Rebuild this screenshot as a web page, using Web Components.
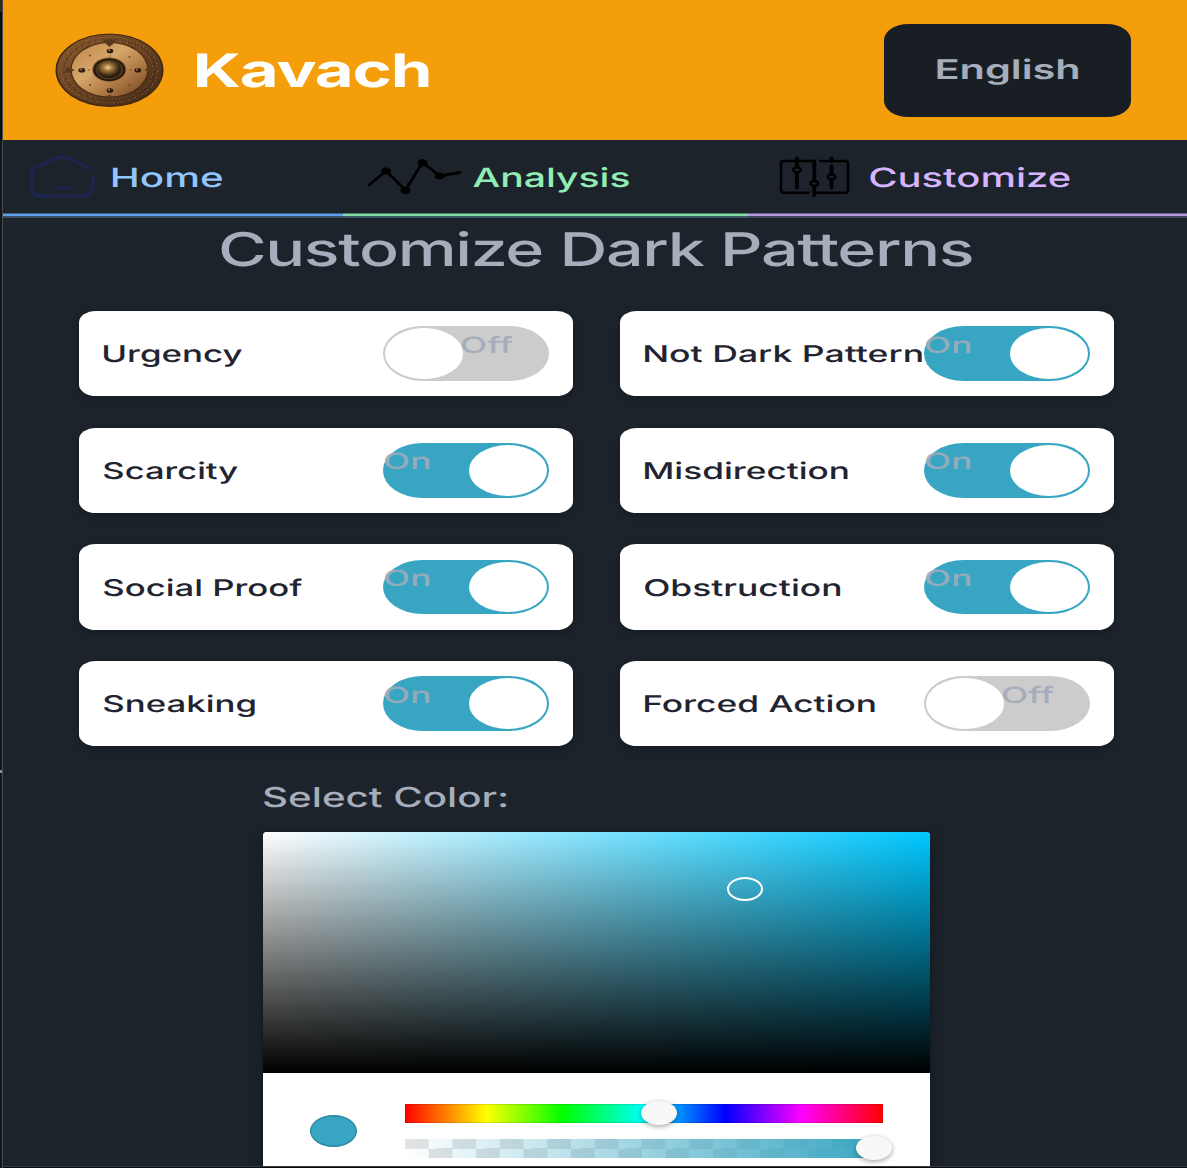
<!DOCTYPE html>
<html lang="en">
<head>
<meta charset="utf-8">
<title>Kavach</title>
<style>
html,body{margin:0;background:#1c232b;overflow:hidden}
body{font-family:Inter,"Liberation Sans",sans-serif;color:#a6adbb}
</style>
</head>
<body>
<kavach-app></kavach-app>
<script>
const root = (el, html) => { el.attachShadow({mode:'open'}).innerHTML = html; return el.shadowRoot; };

/* Text whose glyphs are widened so the ink spans exactly `w` pixels.
   Bounds are measured at 10x size to avoid integer rounding. */
class WideText extends HTMLElement {
  connectedCallback() {
    const w = +this.getAttribute('w'), size = +this.getAttribute('size');
    const weight = this.getAttribute('weight') || 500, ls = this.getAttribute('spacing') || 0;
    const ctx = document.createElement('canvas').getContext('2d');
    ctx.font = `${weight} ${size * 10}px Inter, "Liberation Sans", sans-serif`;
    const text = this.textContent;
    const m = ctx.measureText(text);
    const left = m.actualBoundingBoxLeft / 10, right = m.actualBoundingBoxRight / 10;
    const k = w / (left + right + ls * (text.length - 1));
    root(this, `<style>
      :host{display:block;flex:none;width:${w}px;height:${size}px;font-size:${size}px;font-weight:${weight};line-height:1;letter-spacing:${ls}px;white-space:nowrap;text-align:left;font-optical-sizing:none;text-rendering:geometricPrecision}
      span{display:inline-block;line-height:1;vertical-align:top;transform-origin:0 0;transform:translateX(${left * k}px) scaleX(${k})}
    </style><span><slot></slot></span>`);
  }
}
customElements.define('wide-text', WideText);

class ShieldLogo extends HTMLElement {
  connectedCallback() {
    root(this, `<style>:host{display:block;flex:none;width:110px;height:75px}svg{display:block}</style>
    <svg width="110" height="75" viewBox="0 0 110 75">
      <defs>
        <linearGradient id="rim" x1="0" y1="0" x2="1" y2="1"><stop offset="0" stop-color="#8b5a2b"/><stop offset=".5" stop-color="#684324"/><stop offset="1" stop-color="#3f2716"/></linearGradient>
        <linearGradient id="face" x1="0" y1="0" x2="1" y2="1"><stop offset="0" stop-color="#c08848"/><stop offset=".4" stop-color="#d6a66a"/><stop offset=".7" stop-color="#a97341"/><stop offset="1" stop-color="#6d4424"/></linearGradient>
        <radialGradient id="boss" cx=".45" cy=".4" r=".6"><stop offset="0" stop-color="#f0d596"/><stop offset=".3" stop-color="#a57b3d"/><stop offset=".75" stop-color="#3d2a15"/><stop offset="1" stop-color="#1c130b"/></radialGradient>
      </defs>
      <ellipse cx="54.5" cy="37.200" rx="54" ry="36.800" fill="#422711"/>
      <ellipse cx="54.5" cy="37" rx="52.300" ry="35.400" fill="url(#rim)"/>
      <ellipse cx="54.5" cy="37" rx="46" ry="31.500" fill="none" stroke="#2f1c0e" stroke-width="5" stroke-dasharray="2 1.300 1 2.700" opacity=".3"/>
      <ellipse cx="54.5" cy="37" rx="48" ry="32.800" fill="none" stroke="#b88548" stroke-width="1.300" stroke-dasharray="2 1.500 1 2.800" opacity=".5"/>
      <ellipse cx="54.5" cy="37" rx="43.500" ry="29.700" fill="none" stroke="#b88548" stroke-width="1.200" stroke-dasharray="1 2.500 2 1.700" opacity=".4"/>
      <ellipse cx="54.5" cy="36.800" rx="39.200" ry="27.800" fill="#4b2d16"/>
      <ellipse cx="54.5" cy="36.800" rx="37.800" ry="26.800" fill="url(#face)"/>
      <path d="M47.500 6.500h14l-2.500 3.500-4.500 4-4.500-4zM48 67h13l-2.500-2.500-4-3-4 3zM11 34l5 1 3.500 2-3.500 2-5 1zM98 34l-5 1-3.500 2 3.500 2 5 1z" fill="#5a381c"/>
      <ellipse cx="54.300" cy="36.700" rx="17.500" ry="12.500" fill="#a87640"/>
      <ellipse cx="54.300" cy="36.700" rx="16.200" ry="11.500" fill="#25180e"/>
      <ellipse cx="54.300" cy="36.700" rx="13.800" ry="9.800" fill="#4f371c"/>
      <ellipse cx="54" cy="36.300" rx="12" ry="8.800" fill="url(#boss)"/>
      <g fill="#2e1b0f"><ellipse cx="55" cy="18" rx="3.300" ry="2.300"/><ellipse cx="26.800" cy="37.200" rx="3.300" ry="2.300"/><ellipse cx="82.800" cy="37.200" rx="3.300" ry="2.300"/><ellipse cx="55" cy="57.500" rx="3.300" ry="2.300"/></g>
      <g fill="#b58150"><circle cx="54.200" cy="17.300" r="1"/><circle cx="26" cy="36.500" r="1"/><circle cx="82" cy="36.500" r="1"/><circle cx="54.200" cy="56.800" r="1"/></g>
      <g fill="#714522"><circle cx="35" cy="22.500" r="1"/><circle cx="74.500" cy="24" r="1"/><circle cx="35" cy="52" r="1"/><circle cx="74.500" cy="52" r="1"/><circle cx="34" cy="37" r=".8"/><circle cx="75.500" cy="37" r=".8"/><circle cx="55" cy="23" r=".8"/></g>
    </svg>`);
  }
}
customElements.define('shield-logo', ShieldLogo);

class AppHeader extends HTMLElement {
  connectedCallback() {
    root(this, `<style>
      :host{display:flex;flex:none;height:140px;box-sizing:border-box;padding:0 56px 0 52px;background:#f59e0b;align-items:flex-start}
      shield-logo{margin-top:33px}
      .name{color:#fff;margin:48.200px auto 0 31.800px}
      .lang{margin-top:23.500px;box-sizing:border-box;width:247px;height:93px;border:0;border-radius:24px/16px;background:#191e24;color:#a6adbb;display:flex;justify-content:flex-start;align-items:flex-start;padding:32.700px 0 0 52.500px;font-family:inherit}
    </style>
    <shield-logo></shield-logo>
    <wide-text class="name" w="231.500" size="46" weight="700" spacing="-.8">Kavach</wide-text>
    <button class="lang"><wide-text w="141" size="27" weight="600">English</wide-text></button>`);
  }
}
customElements.define('app-header', AppHeader);

const ICONS = {
  home: `<svg width="66" height="44" viewBox="0 0 66 44" fill="none" stroke="#1c2552" stroke-width="3" stroke-linecap="round" stroke-linejoin="round"><path d="M61 13.500 39 3.200Q32.500 .8 27 3.200L7 11.200Q1.500 14 1.500 19V33Q1.500 41 12 41H52Q61 41 62 34.500L63.500 22"/><path d="M23 33.500H41" stroke-width="2.500"/></svg>`,
  analysis: `<svg width="96" height="40" viewBox="0 0 96 40" fill="none" stroke="#000" stroke-width="2.800" stroke-linecap="round"><path d="M2 28 19 14 38.500 33 55.500 5.500 73 19 93 15.500"/><g fill="#000" stroke="none"><ellipse cx="19" cy="14" rx="5" ry="3.500"/><ellipse cx="38.500" cy="33.500" rx="5" ry="3.500"/><ellipse cx="55.500" cy="5.800" rx="5" ry="3.700"/><ellipse cx="72.500" cy="19" rx="5" ry="3.500"/></g></svg>`,
  customize: `<svg width="72" height="44" viewBox="0 0 72 44" fill="none" stroke="#000" stroke-linecap="round" stroke-linejoin="round"><path stroke-width="2.500" d="M35.500 6H5Q2 6 2 8.500V35Q2 37.800 5 37.800H29.500M41 6H66Q69 6 69 8.500V35Q69 37.800 66 37.800H36.500"/><path stroke-width="3.800" d="M18 3.500V11.500M18 18V32.500M35.300 6.500V25.500M35.300 31.500V40M52.500 3.500V6M52.500 11.500V19M52.500 24.500V32.500"/><g stroke-width="2.400"><ellipse cx="18" cy="14.800" rx="3.800" ry="2.500"/><ellipse cx="35.300" cy="28.500" rx="3.800" ry="2.500"/><ellipse cx="52.500" cy="21.800" rx="3.800" ry="2.500"/></g></svg>`
};
class NavTab extends HTMLElement {
  connectedCallback() {
    const a = n => this.getAttribute(n);
    root(this, `<style>
      :host{display:flex;box-sizing:border-box;width:${a('width')}px;height:78px;flex:none;padding-left:${a('pad')}px;color:${a('color')};border-bottom:2px solid ${a('dim')};box-shadow:inset 0 -2.500px ${a('line')}}
      .icon{width:${a('text')}px;flex:none;padding-top:${a('icontop')}px}
      svg{display:block}
      .label{padding-top:24.700px}
    </style><div class="icon">${ICONS[a('icon')]}</div><div class="label"><slot></slot></div>`);
  }
}
customElements.define('nav-tab', NavTab);

class ToggleSwitch extends HTMLElement {
  connectedCallback() {
    const on = this.hasAttribute('on');
    root(this, `<style>
      :host{display:block;flex:none;position:relative;width:166px;height:54.500px;border-radius:40px/27.250px;background:${on ? '#38a6c2' : '#ccc'};color:#a6adbb}
      i{position:absolute;top:2px;left:${on ? 86 : 2}px;width:78.200px;height:50.700px;border-radius:50%;background:#fff}
      .state{position:absolute;top:8.300px;left:${on ? 2.500 : 79.300}px;opacity:${on ? .85 : 1}}
    </style><i></i><div class="state">${on ? '<wide-text w="44" size="22.500">On</wide-text>' : '<wide-text w="50.500" size="22.500">Off</wide-text>'}</div>`);
  }
}
customElements.define('toggle-switch', ToggleSwitch);

class PatternCard extends HTMLElement {
  connectedCallback() {
    root(this, `<style>
      :host{display:flex;box-sizing:border-box;height:85.400px;padding:15.400px 24px 0 25.500px;background:#fff;border-radius:17px/11.500px;box-shadow:0 3px 9px rgba(0,0,0,.22);color:#1f2430;justify-content:space-between}
      .label{width:0;padding-top:17px}
    </style><div class="label"><slot></slot></div><toggle-switch ${this.hasAttribute('on') ? 'on' : ''}></toggle-switch>`);
  }
}
customElements.define('pattern-card', PatternCard);

class ColorPicker extends HTMLElement {
  connectedCallback() {
    root(this, `<style>
      :host{display:block;flex:none;width:667.500px;height:334px;background:#fff;border-radius:4px 4px 0 0;box-shadow:0 3px 14px rgba(0,0,0,.38)}
      .field{position:relative;height:241px;border-radius:4px 4px 0 0;background:linear-gradient(to top,#000,transparent),linear-gradient(to right,#fff,#00c8ff)}
      .ring{position:absolute;left:464px;top:45px;width:36px;height:24px;box-sizing:border-box;border:solid #fff;border-width:2px 2.600px;border-radius:50%}
      .controls{display:flex;height:93px}
      .swatch{margin:42px 47.500px 0 47.500px;width:47px;height:32px;border-radius:50%;background:#38a6c2;box-shadow:inset 0 0 0 1.500px rgba(40,110,130,.5)}
      .bars{display:flex;flex-direction:column;gap:16px;padding-top:30.800px}
      .bar{position:relative;width:478px;height:19.200px}
      .hue{background:linear-gradient(to right,red,#ff0 17%,lime 33%,cyan 50%,blue 67%,magenta 83%,red);box-shadow:inset 0 0 1.500px rgba(0,0,0,.6)}
      .alpha{background:linear-gradient(to right,rgba(56,166,194,0),#38a6c2),repeating-conic-gradient(#fff 0 25%,#e4e4e4 0 50%) 0 0/47.400px 19.200px}
      .knob{position:absolute;width:36px;height:24px;top:-2.600px;border-radius:50%;background:#f8f8f8;box-shadow:0 1.500px 5px rgba(0,0,0,.37)}
    </style>
    <div class="field"><div class="ring"></div></div>
    <div class="controls"><div class="swatch"></div><div class="bars">
      <div class="bar hue"><div class="knob" style="left:236px"></div></div>
      <div class="bar alpha"><div class="knob" style="left:451px"></div></div>
    </div></div>`);
  }
}
customElements.define('color-picker', ColorPicker);

class KavachApp extends HTMLElement {
  connectedCallback() {
    const cards = [
      ['Urgency',138,0],['Not Dark Pattern',276.500,1],['Scarcity',133.500,1],['Misdirection',202.500,1],
      ['Social Proof',198,1],['Obstruction',195,1],['Sneaking',150.500,1],['Forced Action',229.500,0]];
    root(this, `<style>
      :host{display:flex;width:1187px;height:1168px;box-sizing:border-box;overflow:hidden;background:#1c232b}
      .edge{width:3px;flex:none;box-sizing:border-box;background:linear-gradient(#33291b 0 12px,#0a0d0c 12px 140px,#11161a 140px 770px,#8b8f92 770px 773px,#11161a 773px);border-right:1px solid #454b50}
      .page{width:1184px;flex:none;display:flex;flex-direction:column}
      nav{display:flex;flex:none}
      .title{margin:8.900px 0 0 217.500px}
      .grid{display:grid;flex:none;grid-template-columns:494px 494px;column-gap:47.400px;row-gap:31.250px;margin:37.800px 0 0 75.600px}
      .pick{flex:none;margin-top:37.500px;margin-left:259.600px}
      .pick>wide-text{margin-left:1px}
      .pick color-picker{margin-top:20.650px}
      .foot{flex:none;height:2px;background:#07090b;box-shadow:inset 0 1px #34393e}
    </style>
    <div class="edge"></div>
    <div class="page">
      <app-header></app-header>
      <nav>
        <nav-tab width="340" pad="27" text="82.500" icon="home" icontop="15" color="#93c5fd" line="#60a0e8" dim="#3a5068"><wide-text w="109" size="26.500">Home</wide-text></nav-tab>
        <nav-tab width="405" pad="24" text="105.500" icon="analysis" icontop="17.200" color="#92edb5" line="#82dca3" dim="#3b5960"><wide-text w="156" size="26.500">Analysis</wide-text></nav-tab>
        <nav-tab width="439" pad="31" text="90.500" icon="customize" icontop="15" color="#d8b4fe" line="#b59ade" dim="#414564"><wide-text w="199.500" size="26.500">Customize</wide-text></nav-tab>
      </nav>
      <wide-text class="title" w="751" size="46.300" spacing="-.9">Customize Dark Patterns</wide-text>
      <div class="grid">${cards.map(([t,w,on]) => `<pattern-card ${on ? 'on' : ''}><wide-text w="${w}" size="23" weight="450">${t}</wide-text></pattern-card>`).join('')}</div>
      <div class="pick"><wide-text w="242.500" size="27.500">Select Color:</wide-text><color-picker></color-picker></div>
      <div class="foot"></div>
    </div>`);
  }
}
customElements.define('kavach-app', KavachApp);
</script>
</body>
</html>
